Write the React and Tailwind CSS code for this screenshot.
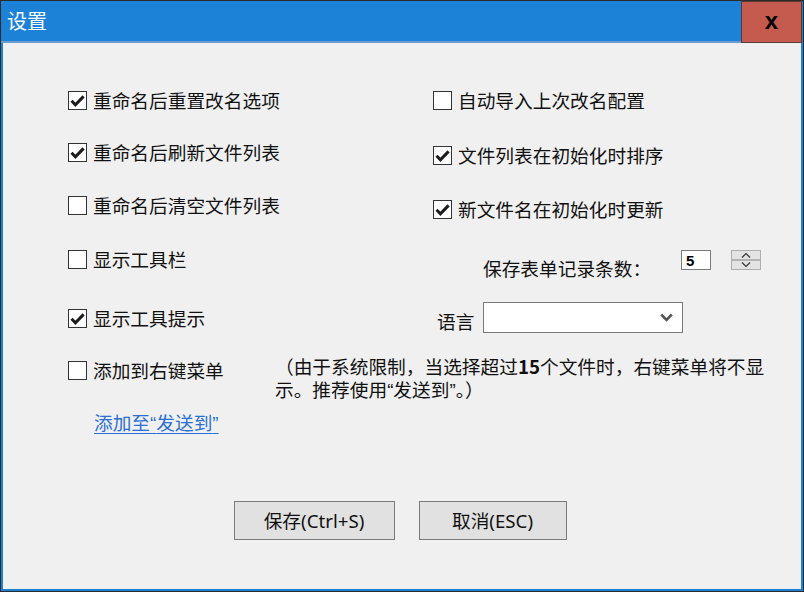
import React from "react";

const cjk = "font-['Noto_Sans_CJK_SC','Liberation_Sans',sans-serif]";

function Box({ checked }) {
  return (
    <span className="flex h-[19px] w-[19px] shrink-0 items-center justify-center border border-[#333333] bg-white">
      {checked && (
        <svg width="17" height="17" viewBox="0 0 17 17">
          <path d="M2.5 8.8 L6.4 12.8 L14.6 4.4" fill="none" stroke="#1c1c1c" strokeWidth="3" />
        </svg>
      )}
    </span>
  );
}

function Check({ checked, label, className = "" }) {
  return (
    <div className={`flex h-[22px] items-center gap-[6px] ${className}`}>
      <Box checked={checked} />
      <span className="whitespace-nowrap">{label}</span>
    </div>
  );
}

const Q = ({ children }) => <span className="font-['Liberation_Sans',sans-serif]">{children}</span>;

export default function App() {
  return (
    <div className={`flex h-[592px] w-[804px] flex-col bg-[#2b2b2b] p-[1px] ${cjk}`}>
      <div className="flex flex-1 flex-col bg-[#1b82d7]">
        {/* title bar */}
        <div className="flex h-[42px] shrink-0">
          <div className="flex flex-1 items-center border-b-2 border-[#6b9bd0] pl-[6px] pb-[1px] text-[20px] leading-[24px] text-white">
            设置
          </div>
          <div className="mr-[1px] flex w-[61px] items-center justify-center border border-[#5a3834] bg-[#c45b4e] pb-[3px] font-['Liberation_Sans',sans-serif] text-[24px] font-bold leading-none text-black">
            x
          </div>
        </div>

        {/* body */}
        <div className="mx-[2px] mb-[2px] flex flex-1 flex-col bg-[#f0f0f0] pl-[65px] text-[18.7px] leading-[22px] text-[#111]">
          <div className="flex pt-[46px]">
            <div className="flex w-[365px] flex-col">
              <Check checked label="重命名后重置改名选项" />
              <Check checked label="重命名后刷新文件列表" className="mt-[30px]" />
              <Check label="重命名后清空文件列表" className="mt-[31px]" />
              <Check label="显示工具栏" className="mt-[32px]" />
              <Check checked label="显示工具提示" className="mt-[37px]" />
            </div>
            <div className="flex flex-col">
              <Check label="自动导入上次改名配置" />
              <Check checked label="文件列表在初始化时排序" className="mt-[33px]" />
              <Check checked label="新文件名在初始化时更新" className="mt-[32px]" />

              <div className="mt-[30px] flex items-start pl-[50px]">
                <span className="mt-[7px] w-[198px] whitespace-nowrap">保存表单记录条数：</span>
                <div className="flex h-[20px] w-[30px] items-center border border-[#7a7a7a] bg-white pl-[4px] font-['Liberation_Sans',sans-serif] text-[15px] font-bold leading-none text-black">
                  5
                </div>
                <div className="ml-[20px] flex h-[20px] w-[30px] flex-col border border-[#adadad] bg-[#e3e3e3]">
                  <div className="flex flex-1 items-center justify-center border-b-2 border-[#b4b4b4]">
                    <svg width="10" height="6" viewBox="0 0 10 6">
                      <path d="M1 5.5 L5 1.5 L9 5.5" fill="none" stroke="#333" strokeWidth="1.2" />
                    </svg>
                  </div>
                  <div className="flex flex-1 items-center justify-center">
                    <svg width="10" height="6" viewBox="0 0 10 6">
                      <path d="M1 0.5 L5 4.5 L9 0.5" fill="none" stroke="#333" strokeWidth="1.2" />
                    </svg>
                  </div>
                </div>
              </div>

              <div className="mt-[23px] flex items-center pl-[4px]">
                <span className="w-[46px] pt-[6px]">语言</span>
                <div className="flex h-[31px] w-[200px] items-center justify-end border border-[#7a7a7a] bg-white pr-[9px]">
                  <svg width="13" height="9" viewBox="0 0 13 9">
                    <path d="M1.2 1.5 L6.5 7 L11.8 1.5" fill="none" stroke="#555" strokeWidth="2.6" />
                  </svg>
                </div>
              </div>
            </div>
          </div>

          <div className="mt-[21px] flex items-start">
            <Check label="添加到右键菜单" className="mt-[5px] w-[207px]" />
            <p className="whitespace-nowrap leading-[23px]">
              （由于系统限制，当选择超过<span className="font-bold">15</span>个文件时，右键菜单将不显
              <br />
              示。推荐使用<Q>“</Q>发送到<Q>”</Q>。）
            </p>
          </div>

          <a className="ml-[26px] mt-[9px] w-fit text-[#2a6fd3] underline underline-offset-[3px]">
            添加至<Q>“</Q>发送到<Q>”</Q>
          </a>

          <div className="mt-auto flex justify-center gap-[24px] pb-[49px] pr-[69px] font-['Noto_Sans','Noto_Sans_CJK_SC',sans-serif] text-[18.7px]">
            <button className="flex h-[39px] w-[161px] items-center justify-center border border-[#7a7a7a] bg-[#e1e1e1] text-[#111]">
              保存(Ctrl+S)
            </button>
            <button className="flex h-[39px] w-[148px] items-center justify-center border border-[#7a7a7a] bg-[#e1e1e1] text-[#111]">
              取消(ESC)
            </button>
          </div>
        </div>
      </div>
    </div>
  );
}
